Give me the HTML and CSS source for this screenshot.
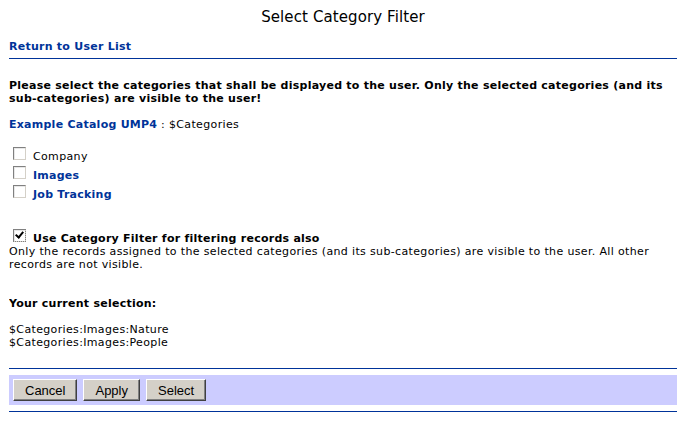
FILE: index.html
```html
<!DOCTYPE html>
<html lang="en">
  <head>
    <meta charset="UTF-8" />
    <title>Select Category Filter</title>
    <link rel="stylesheet" href="styles.css">
  </head>
  <body>
    <h1 class="page-title">Select Category Filter</h1>
    <div class="nav">
      <a href="#" class="link">Return to User List</a>
    </div>
    <hr class="rule" />

    <form id="filterForm">
      <p class="intro">
        Please select the categories that shall be displayed to the user. Only the selected categories (and its
        sub-categories) are visible to the user!
      </p>
      <p class="catalog"><a href="#" class="link">Example Catalog UMP4</a> : $Categories</p>

      <ul class="category-list">
        <li class="check-row">
          <input type="checkbox" class="check" id="catCompany" />
          <label for="catCompany" class="check-text">Company</label>
        </li>
        <li class="check-row">
          <input type="checkbox" class="check" id="catImages" />
          <a href="#" class="check-text link">Images</a>
        </li>
        <li class="check-row">
          <input type="checkbox" class="check" id="catJobs" />
          <a href="#" class="check-text link">Job Tracking</a>
        </li>
      </ul>

      <div class="filter-option">
        <div class="check-row">
          <input type="checkbox" class="check" id="useFilter" checked />
          <label for="useFilter" class="check-text bold">Use Category Filter for filtering records also</label>
        </div>
        <div class="hint">
          Only the records assigned to the selected categories (and its sub-categories) are visible to the user. All other
          records are not visible.
        </div>
      </div>

      <p class="selection-title">Your current selection:</p>
      <p class="selection">
        $Categories:Images:Nature<br />
        $Categories:Images:People
      </p>

      <hr class="rule rule-bottom" />
      <div class="button-bar">
        <button type="button" class="btn">Cancel</button>
        <button type="button" class="btn">Apply</button>
        <button type="submit" class="btn">Select</button>
      </div>
      <hr class="rule rule-last" />
    </form>
  </body>
</html>
```

FILE: styles.css
```css
body {
  margin: 0 9px;
  padding: 0;
  background: #ffffff;
  color: #000000;
  font-family: "DejaVu Sans", Verdana, sans-serif;
  font-size: 11px;
  line-height: 13px;
  letter-spacing: 0.35px;
}

p {
  margin: 0;
}

.page-title {
  margin: 8px 0 0;
  font-size: 15px;
  font-weight: normal;
  line-height: 18px;
  letter-spacing: 0.1px;
  text-align: center;
}

.nav {
  margin-top: 14px;
}

.link {
  color: #003399; /* dark blue links */
  font-weight: bold;
  letter-spacing: 0.25px;
  text-decoration: none;
}

.rule {
  margin: 5px 0 0;
  border: none;
  height: 1px;
  background-color: #003399;
}

.intro {
  margin-top: 20px;
  font-weight: bold;
  letter-spacing: 0.25px;
}

.catalog {
  margin-top: 13px;
}

.category-list {
  list-style: none;
  margin: 16px 0 0;
  padding: 0;
}

.check-row {
  display: flex;
  align-items: flex-start;
  min-height: 19px;
}

.category-list .check-row {
  height: 19px;
}

.filter-option .check-row {
  min-height: 16px;
}

.check {
  appearance: none;
  -webkit-appearance: none;
  position: relative;
  box-sizing: border-box;
  width: 13px;
  height: 13px;
  margin: 0 7px 0 4px;
  background: #ffffff;
  border: 1px solid;
  border-color: #808080 #d4d0c8 #d4d0c8 #808080;
  box-shadow: inset 1px 1px 0 #e8e8e8;
}

.check:checked {
  outline: 1px dotted #808080;
  outline-offset: -1px;
}

.check:checked::after {
  content: "";
  position: absolute;
  left: 3px;
  top: 0px;
  width: 3px;
  height: 6px;
  border: solid #000000;
  border-width: 0 2px 2px 0;
  transform: rotate(40deg);
}

.check-text {
  padding-top: 3px;
}

.bold {
  font-weight: bold;
  letter-spacing: 0.25px;
}

.filter-option {
  margin-top: 25px;
}

.selection-title {
  margin-top: 26px;
  font-weight: bold;
  letter-spacing: 0.25px;
}

.selection {
  margin-top: 13px;
}

.rule-bottom {
  margin-top: 19px;
}

.button-bar {
  display: flex;
  gap: 6px;
  margin-top: 6px;
  padding: 4px 4px;
  background-color: #ccccff; /* lavender band */
}

.btn {
  height: 22px;
  padding: 0 11px;
  background-color: #d4d0c8;
  border: 1px solid;
  border-color: #ffffff #404040 #404040 #ffffff;
  box-shadow: inset -1px -1px 0 #808080;
  font-family: "Liberation Sans", Arial, sans-serif;
  font-size: 13px;
  letter-spacing: 0;
  color: #000000;
  cursor: pointer;
}

.rule-last {
  margin-top: 6px;
}
```
